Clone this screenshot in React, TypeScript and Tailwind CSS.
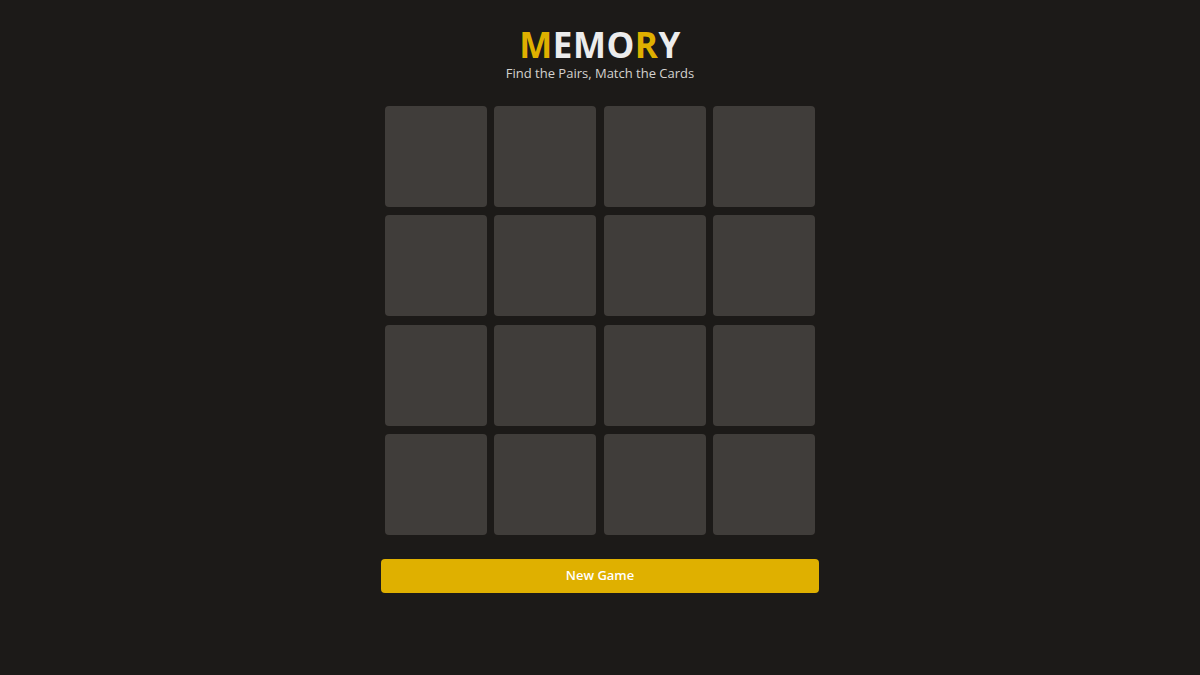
import React from 'react';

const cards = Array.from({ length: 16 }, (_, i) => i);

export default function App() {
  return (
    <div
      className="min-h-screen w-full bg-[#1c1a18] flex flex-col items-center"
      style={{ fontFamily: '"Open Sans", "Noto Sans", sans-serif' }}
    >
      <h1 className="mt-[24px] text-[35px] leading-[42px] font-bold tracking-[0.5px]">
        <span className="text-[#dfb000]">M</span>
        <span className="text-[#ececec]">EMO</span>
        <span className="text-[#dfb000]">R</span>
        <span className="text-[#ececec]">Y</span>
      </h1>
      <p className="mt-[-2px] text-[13px] leading-[18px] text-[#d4d2cf]">Find the Pairs, Match the Cards</p>

      <div className="mt-[23.5px] grid grid-cols-4 gap-x-[7.5px] gap-y-[8.5px] w-[430px]">
        {cards.map((c) => (
          <div key={c} className="h-[101px] rounded-[4px] bg-[#403d3a]" />
        ))}
      </div>

      <button className="mt-[23.5px] w-[438px] h-[34px] rounded-[4px] bg-[#dfb000] text-white text-[13px] font-semibold">
        New Game
      </button>
    </div>
  );
}
